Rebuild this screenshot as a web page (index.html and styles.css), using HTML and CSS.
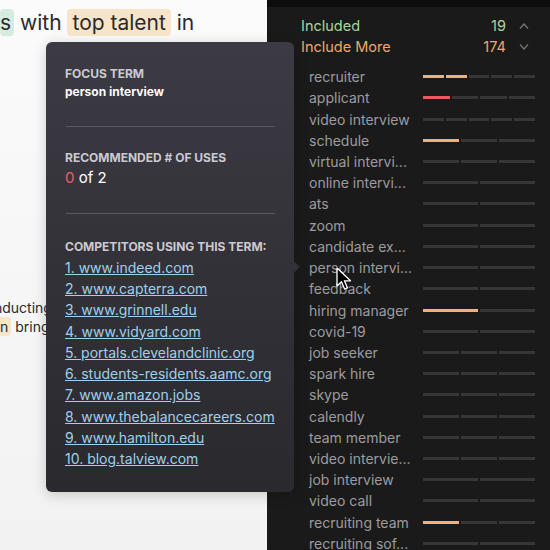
FILE: index.html
```html
<!DOCTYPE html>
<html>
<head>
<meta charset="utf-8">
<title>Focus term</title>
<link rel="stylesheet" href="styles.css">
</head>
<body>
  <div id="editor">
    <p class="lead"><span class="hl-green">s</span> with <span class="hl-orange">top talent</span> in</p>
    <p class="body-text">nducting interviews is
      <br><span class="hl-orange">n</span> bring the right people</p>
  </div>

  <div id="terms-panel">
    <div class="summary">
      <div class="summary-row included"><span class="summary-label">Included</span><span class="summary-count">19</span>
        <svg class="chevron" width="10" height="6" viewBox="0 0 10 6"><path d="M1 5.5 L5 1 L9 5.5" fill="none" stroke="#77777b" stroke-width="1.2"/></svg>
      </div>
      <div class="summary-row more"><span class="summary-label">Include More</span><span class="summary-count">174</span>
        <svg class="chevron" width="10" height="6" viewBox="0 0 10 6"><path d="M1 0.5 L5 5 L9 0.5" fill="none" stroke="#77777b" stroke-width="1.2"/></svg>
      </div>
    </div>
    <ul id="term-list"></ul>
  </div>

  <div id="tooltip">
    <div class="tip-section">
      <div class="tip-title">FOCUS TERM</div>
      <div class="tip-term">person interview</div>
    </div>
    <div class="tip-divider"></div>
    <div class="tip-section">
      <div class="tip-title">RECOMMENDED # OF USES</div>
      <div class="tip-uses"><span class="uses-zero">0</span> of 2</div>
    </div>
    <div class="tip-divider divider-wide"></div>
    <div class="tip-section">
      <div class="tip-title">COMPETITORS USING THIS TERM:</div>
      <ol class="tip-links">
        <li><a href="#">1. www.indeed.com</a></li>
        <li><a href="#">2. www.capterra.com</a></li>
        <li><a href="#">3. www.grinnell.edu</a></li>
        <li><a href="#">4. www.vidyard.com</a></li>
        <li><a href="#">5. portals.clevelandclinic.org</a></li>
        <li><a href="#">6. students-residents.aamc.org</a></li>
        <li><a href="#">7. www.amazon.jobs</a></li>
        <li><a href="#">8. www.thebalancecareers.com</a></li>
        <li><a href="#">9. www.hamilton.edu</a></li>
        <li><a href="#">10. blog.talview.com</a></li>
      </ol>
    </div>
    <div class="tip-arrow"></div>
  </div>

  <svg id="cursor" width="16" height="24" viewBox="0 0 16 24">
    <path d="M1 1 L1 19 L5.5 14.8 L8.6 22 L11.4 20.8 L8.4 13.8 L14.5 13.8 Z" fill="#000" stroke="#fff" stroke-width="1.3" stroke-linejoin="round"/>
  </svg>

  <script>
    var terms = [
      { name: "recruiter", segs: 5, filled: 2, color: "orange" },
      { name: "applicant", segs: 4, filled: 1, color: "red" },
      { name: "video interview", segs: 5, filled: 0 },
      { name: "schedule", segs: 3, filled: 1, color: "orange" },
      { name: "virtual intervi...", segs: 3, filled: 0 },
      { name: "online intervi...", segs: 2, filled: 0 },
      { name: "ats", segs: 2, filled: 0 },
      { name: "zoom", segs: 2, filled: 0 },
      { name: "candidate ex...", segs: 2, filled: 0 },
      { name: "person intervi...", segs: 2, filled: 0 },
      { name: "feedback", segs: 2, filled: 0 },
      { name: "hiring manager", segs: 2, filled: 1, color: "orange" },
      { name: "covid-19", segs: 2, filled: 0 },
      { name: "job seeker", segs: 3, filled: 0 },
      { name: "spark hire", segs: 3, filled: 0 },
      { name: "skype", segs: 3, filled: 0 },
      { name: "calendly", segs: 3, filled: 0 },
      { name: "team member", segs: 3, filled: 0 },
      { name: "video intervie...", segs: 3, filled: 0 },
      { name: "job interview", segs: 2, filled: 0 },
      { name: "video call", segs: 2, filled: 0 },
      { name: "recruiting team", segs: 3, filled: 1, color: "orange" },
      { name: "recruiting sof...", segs: 2, filled: 0 }
    ];

    var list = document.getElementById("term-list");

    for (var i = 0; i < terms.length; i++) {
      var li = document.createElement("li");
      li.className = "term";

      var label = document.createElement("span");
      label.className = "term-name";
      label.innerText = terms[i].name;
      li.appendChild(label);

      var bar = document.createElement("span");
      bar.className = "term-bar";
      for (var s = 0; s < terms[i].segs; s++) {
        var seg = document.createElement("span");
        seg.className = "seg";
        if (s < terms[i].filled) seg.className += " seg-" + terms[i].color;
        bar.appendChild(seg);
      }
      li.appendChild(bar);

      list.appendChild(li);
    }
  </script>
</body>
</html>
```

FILE: styles.css
```css
body {
  margin: 0;
  padding: 0;
  width: 550px;
  height: 550px;
  overflow: hidden;
  display: flex;
  font-family: Inter, "Liberation Sans", sans-serif;
  background-color: #1a191a;
}

#editor {
  width: 267px;
  flex-shrink: 0;
  background: linear-gradient(#fbfbfb, #f2f2f3);
  color: #2a2a2c;
  overflow: hidden;
}

.lead {
  margin: 9px 0 0 0;
  font-size: 21px;
  line-height: 28px;
  white-space: nowrap;
}

.hl-green {
  background-color: #d5ede0;
  border-radius: 4px;
  padding: 1px 3px 1px 0;
}

.hl-orange {
  background-color: #f8e4c9;
  border-radius: 4px;
  padding: 1px 5px;
}

.body-text {
  margin: 261px 0 0 -6px;
  font-size: 14px;
  line-height: 19px;
  white-space: nowrap;
}

.body-text .hl-orange {
  padding: 1px 3px 1px 6px;
}

#terms-panel {
  flex: 1;
  border-top: 7px solid #0d0d0d;
  background-color: #1b1a1b;
  color: #9c9c9f;
}

.summary {
  padding: 8px 0 0 34px;
}

.summary-row {
  display: flex;
  align-items: center;
  height: 21px;
  font-size: 14.5px;
}

.summary-label {
  flex: 1;
}

.summary-count {
  margin-right: 13px;
}

.chevron {
  margin-right: 21px;
}

.included {
  color: #a7d79f;
}

.more {
  color: #eda86b;
}

#term-list {
  list-style: none;
  margin: 9px 0 0 0;
  padding: 0 0 0 42px;
}

.term {
  display: flex;
  align-items: center;
  height: 21.22px;
  font-size: 14px;
}

.term-name {
  width: 114px;
  white-space: nowrap;
}

.term-bar {
  width: 112px;
  height: 3px;
  display: flex;
  gap: 2px;
}

.seg {
  flex: 1;
  background-color: #363537;
}

.seg-orange {
  background-color: #f1b17b;
}

.seg-red {
  background-color: #e65a60;
}

#tooltip {
  position: absolute;
  left: 46px;
  top: 42px;
  width: 210px;
  height: 427px;
  padding: 23px 19px 0 19px;
  border-radius: 6px;
  background: linear-gradient(#3c3a43, #2a292e);
  box-shadow: 0 3px 14px rgba(0, 0, 0, 0.18);
  color: #fff;
}

.tip-title {
  font-size: 12px;
  font-weight: bold;
  line-height: 18px;
  color: #cbcad0;
}

.tip-term {
  font-size: 12px;
  font-weight: bold;
  line-height: 18px;
}

.tip-uses {
  margin-top: 1px;
  font-size: 15px;
  line-height: 20px;
}

.uses-zero {
  color: #e8616a;
}

.tip-divider {
  height: 1px;
  margin: 25px 0 22px 1px;
  background-color: #5a5862;
}

.divider-wide {
  margin: 25px 0 24px 1px;
}

.tip-links {
  list-style: none;
  margin: 1px 0 0 0;
  padding: 0;
}

.tip-links li {
  height: 21.22px;
  line-height: 21.22px;
  font-size: 14px;
}

.tip-links a {
  color: #9fd1ea;
  text-decoration: underline;
  white-space: nowrap;
}

.tip-arrow {
  position: absolute;
  right: -4px;
  top: 221px;
  width: 8px;
  height: 8px;
  transform: rotate(45deg);
  background-color: #323138;
}

#cursor {
  position: absolute;
  left: 336px;
  top: 267px;
}
```
